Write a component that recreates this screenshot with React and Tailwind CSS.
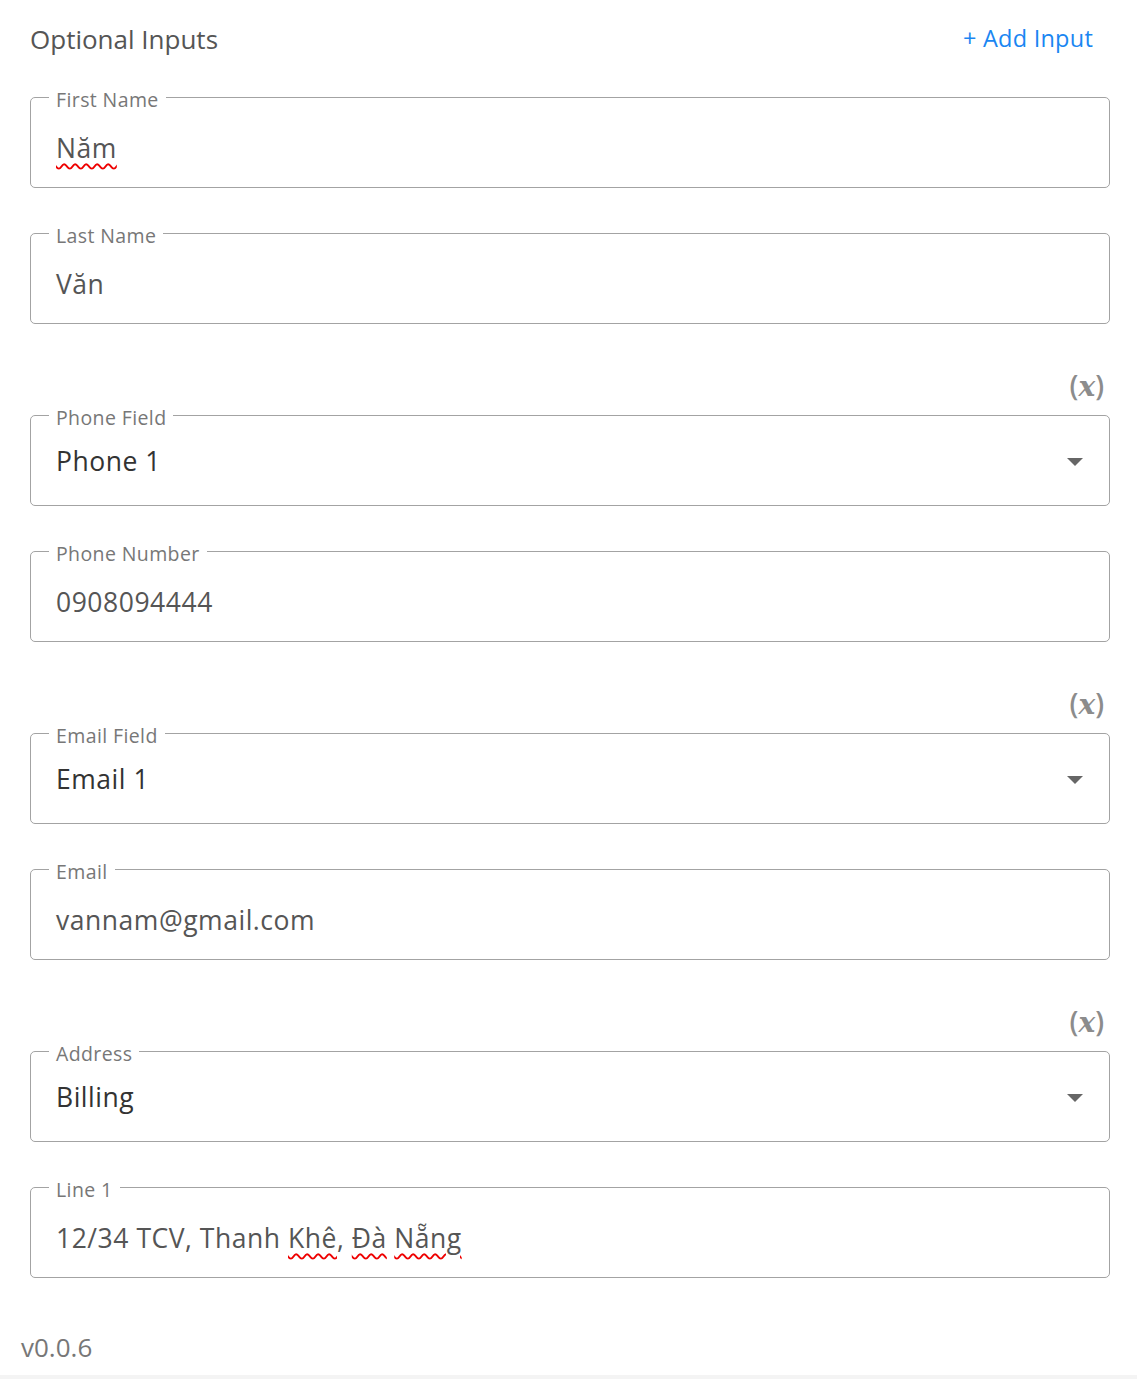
import { useState } from 'react';

const font = { fontFamily: '"Open Sans", "Noto Sans", sans-serif' };

const Field = ({ label, value, select, spell }) => (
  <div className="relative h-[91px] rounded-[5px] border border-[#a3a3a3] flex items-center pl-[25px] pr-[25px]">
    <span className="absolute left-[18px] top-[2px] -translate-y-1/2 bg-white px-[7px] text-[19.5px] leading-none tracking-[0.02em] text-[#777]">
      {label}
    </span>
    <span
      className={
        'flex-1 text-[26.5px] tracking-[0.02em] ' +
        (select ? 'text-[#333] pt-[3px]' : 'text-[#555] pt-[12px]')
      }
    >
      {spell ? spell : value}
    </span>
    {select && (
      <svg width="16" height="8" viewBox="0 0 16 8" className="shrink-0 mr-[1px] mt-[2px]">
        <path d="M0 0h16L8 8z" fill="#666" />
      </svg>
    )}
  </div>
);

const Squiggle = ({ children }) => (
  <span className="underline decoration-wavy decoration-[#e00] decoration-[1.5px] underline-offset-[5px]">
    {children}
  </span>
);

const VarToggle = () => (
  <div className="h-[30px] mb-[15px] flex justify-end pr-[6px]">
    <span className="text-[28px] leading-[30px] font-semibold text-[#8c8c8c]">
      (<i className="font-semibold" style={{ fontFamily: '"DejaVu Serif", serif' }}>x</i>)
    </span>
  </div>
);

export default function App() {
  const [groups] = useState([
    {
      toggle: false,
      fields: [
        { label: 'First Name', spell: <Squiggle>Năm</Squiggle> },
        { label: 'Last Name', value: 'Văn' },
      ],
    },
    {
      toggle: true,
      fields: [
        { label: 'Phone Field', value: 'Phone 1', select: true },
        { label: 'Phone Number', value: '0908094444' },
      ],
    },
    {
      toggle: true,
      fields: [
        { label: 'Email Field', value: 'Email 1', select: true },
        { label: 'Email', value: 'vannam@gmail.com' },
      ],
    },
    {
      toggle: true,
      fields: [
        { label: 'Address', value: 'Billing', select: true },
        {
          label: 'Line 1',
          spell: (
            <>
              12/34 TCV, Thanh <Squiggle>Khê</Squiggle>, <Squiggle>Đà</Squiggle>{' '}
              <Squiggle>Nẵng</Squiggle>
            </>
          ),
        },
      ],
    },
  ]);

  return (
    <div style={font} className="bg-[#f4f4f4] min-h-screen">
      <div className="bg-white pb-[10px]">
        <div className="pl-[30px] pr-[27px]">
          {/* header */}
          <div className="flex items-center justify-between h-[97px] pb-[28px] pt-[10px]">
            <h2 className="text-[26px] text-[#555]">Optional Inputs</h2>
            <button className="text-[23.5px] text-[#1a86f2] tracking-[0.01em] mr-[17px] -mt-[2px]">+ Add Input</button>
          </div>

          <div className="flex flex-col gap-[46px]">
            {groups.map((g, gi) => (
              <div key={gi} className="flex flex-col">
                {g.toggle && <VarToggle />}
                <div className="flex flex-col gap-[45px]">
                  {g.fields.map((f) => (
                    <Field key={f.label} {...f} />
                  ))}
                </div>
              </div>
            ))}
          </div>
        </div>

        <div className="pl-[21px] pt-[51px] text-[26px] text-[#777] leading-[36px]">v0.0.6</div>
      </div>
      <div className="h-[20px]" />
    </div>
  );
}
